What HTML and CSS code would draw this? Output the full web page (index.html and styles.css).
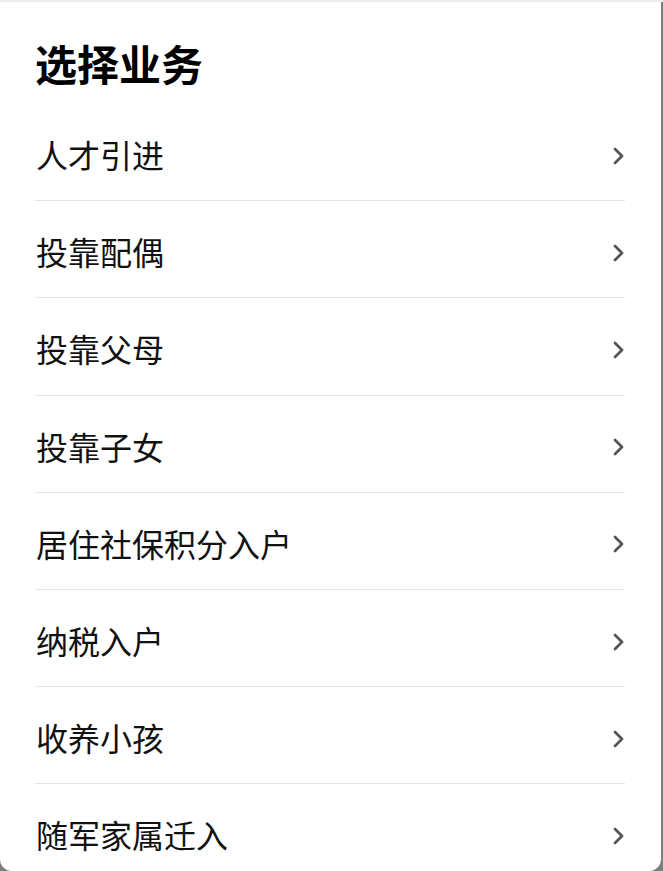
FILE: index.html
```html
<!DOCTYPE html>
<html lang="zh-CN">
<head>
  <meta charset="UTF-8" />
  <meta name="viewport" content="width=device-width, initial-scale=1" />
  <title>选择业务</title>
  <link rel="stylesheet" href="styles.css">
</head>
<body>
  <div class="topline"></div>
  <div class="sheet">
    <h2 class="sheet-title">选择业务</h2>
    <ul class="biz-list">
      <li class="biz-item"><span>人才引进</span><svg class="arrow" viewBox="0 0 14 20"><polyline points="3,3 10,10 3,17" /></svg></li>
      <li class="biz-item"><span>投靠配偶</span><svg class="arrow" viewBox="0 0 14 20"><polyline points="3,3 10,10 3,17" /></svg></li>
      <li class="biz-item"><span>投靠父母</span><svg class="arrow" viewBox="0 0 14 20"><polyline points="3,3 10,10 3,17" /></svg></li>
      <li class="biz-item"><span>投靠子女</span><svg class="arrow" viewBox="0 0 14 20"><polyline points="3,3 10,10 3,17" /></svg></li>
      <li class="biz-item"><span>居住社保积分入户</span><svg class="arrow" viewBox="0 0 14 20"><polyline points="3,3 10,10 3,17" /></svg></li>
      <li class="biz-item"><span>纳税入户</span><svg class="arrow" viewBox="0 0 14 20"><polyline points="3,3 10,10 3,17" /></svg></li>
      <li class="biz-item"><span>收养小孩</span><svg class="arrow" viewBox="0 0 14 20"><polyline points="3,3 10,10 3,17" /></svg></li>
      <li class="biz-item"><span>随军家属迁入</span><svg class="arrow" viewBox="0 0 14 20"><polyline points="3,3 10,10 3,17" /></svg></li>
    </ul>
  </div>
</body>
</html>
```

FILE: styles.css
```css
html, body {
  margin: 0;
  height: 100%;
  overflow: hidden;
}
body {
  background: #7d7d7d;
  font-family: "Noto Sans CJK SC", "Noto Sans", sans-serif;
  color: #111;
}
.topline {
  height: 2px;
  background: #ececec;
}
.sheet {
  background: white;
  margin-right: 2px;
  height: 869px;
  border-radius: 0 0 12px 12px;
  padding: 0 36px 0 35px;
  box-sizing: border-box;
  overflow: hidden;
}
.sheet-title {
  margin: 0;
  padding: 35px 0 16px 0;
  font-size: 42px;
  line-height: 51px;
  font-weight: bold;
  color: #000;
}
.biz-list {
  list-style: none;
  margin: 0;
  padding: 0;
}
.biz-item {
  display: flex;
  align-items: center;
  justify-content: space-between;
  height: 97.2px;
  box-sizing: border-box;
  padding: 4px 0 0 1px;
  border-bottom: 1.5px solid #e4e4e4;
  font-size: 32px;
}
.arrow {
  width: 14px;
  height: 20px;
  margin: 3px -1px 0 0;
  fill: none;
  stroke: #555;
  stroke-width: 2.8;
  stroke-linecap: round;
  stroke-linejoin: round;
}
```
